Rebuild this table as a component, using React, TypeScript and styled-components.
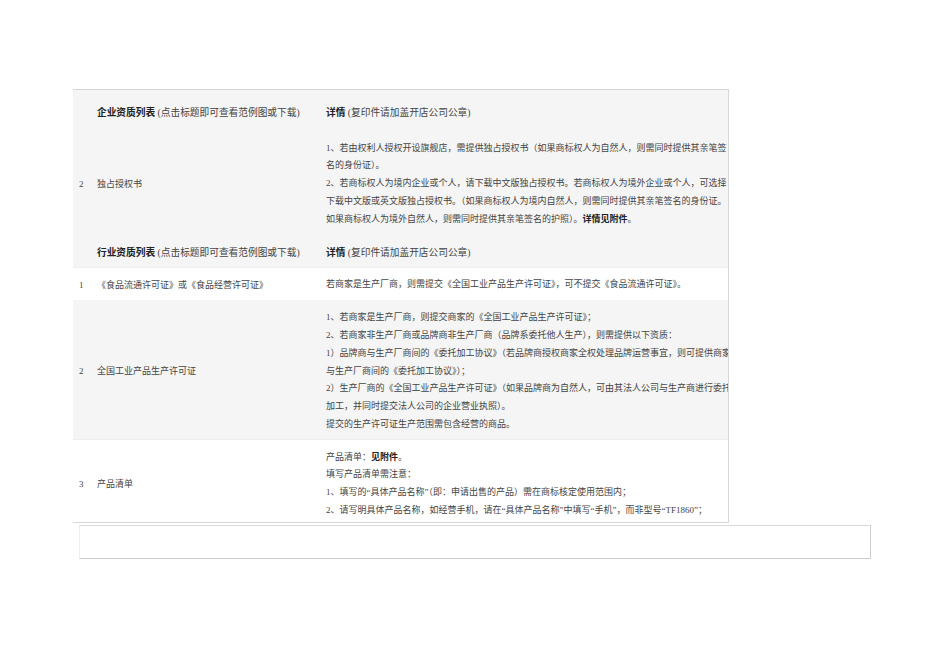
import styled, { createGlobalStyle } from "styled-components";

const GlobalStyle = createGlobalStyle`
  body {
    margin: 0;
    background: #ffffff;
    font-family: "Liberation Serif", "Noto Sans CJK SC", serif;
  }
`;

const Page = styled.div`
  padding: 89px 0 0 73px;
`;

const Panel = styled.div`
  box-sizing: border-box;
  width: 656px;
  height: 434px;
  overflow: hidden;
  background: #ffffff;
  border-top: 1px solid #d6d6d6;
  border-right: 1px solid #d6d6d6;
  border-bottom: 1px solid #d6d6d6;
`;

const HeaderRow = styled.div`
  display: grid;
  grid-template-columns: 18px 229px minmax(0, 1fr);
  align-items: center;
  padding: 10px 0 5px 6px;
  background: #f5f5f5;
  font-size: 9.7px;
  white-space: nowrap;

  &:first-child {
    padding: 14px 0 8px 6px;
  }
`;

const Row = styled.div<{ $shaded?: boolean }>`
  display: grid;
  grid-template-columns: 18px 229px minmax(0, 1fr);
  align-items: center;
  padding: 9.5px 0 5.5px 6px;
  background: ${({ $shaded }) => ($shaded ? "#f5f5f5" : "#ffffff")};
  box-shadow: ${({ $shaded }) => ($shaded ? "none" : "inset 0 1px 0 #eeeeee")};
  font-size: 9px;
  color: #444444;
`;

const Cell = styled.div`
  height: 18px;
  line-height: 18px;
  white-space: nowrap;
`;

const Detail = styled.div`
  display: flex;
  flex-direction: column;
`;

const Line = styled.div`
  height: 17.75px;
  line-height: 17.75px;
  white-space: nowrap;
`;

const Title = styled.span`
  font-weight: 700;
  color: #222222;
`;

const Hint = styled.span`
  color: #444444;
`;

const Strong = styled.b`
  font-weight: 700;
  color: #222222;
`;

const Footer = styled.div`
  box-sizing: border-box;
  width: 792px;
  height: 34px;
  margin: 2px 0 0 6px;
  background: #ffffff;
  border: 1px solid #cccccc;
  border-top-color: #d9d9d9;
  border-left-color: #eeeeee;
`;

type Item = {
  num?: string;
  name: string;
  lines: React.ReactNode[];
  shaded?: boolean;
};

const licences: Item[] = [
  {
    num: "2",
    name: "独占授权书",
    shaded: true,
    lines: [
      "1、若由权利人授权开设旗舰店，需提供独占授权书（如果商标权人为自然人，则需同时提供其亲笔签",
      "名的身份证）。",
      "2、若商标权人为境内企业或个人，请下载中文版独占授权书。若商标权人为境外企业或个人，可选择",
      "下载中文版或英文版独占授权书。（如果商标权人为境内自然人，则需同时提供其亲笔签名的身份证。",
      <>
        如果商标权人为境外自然人，则需同时提供其亲笔签名的护照）。<Strong>详情见附件</Strong>。
      </>,
    ],
  },
];

const industry: Item[] = [
  {
    num: "1",
    name: "《食品流通许可证》或《食品经营许可证》",
    lines: ["若商家是生产厂商，则需提交《全国工业产品生产许可证》，可不提交《食品流通许可证》。"],
  },
  {
    num: "2",
    name: "全国工业产品生产许可证",
    shaded: true,
    lines: [
      "1、若商家是生产厂商，则提交商家的《全国工业产品生产许可证》；",
      "2、若商家非生产厂商或品牌商非生产厂商（品牌系委托他人生产），则需提供以下资质：",
      "1）品牌商与生产厂商间的《委托加工协议》（若品牌商授权商家全权处理品牌运营事宜，则可提供商家",
      "与生产厂商间的《委托加工协议》）；",
      "2）生产厂商的《全国工业产品生产许可证》（如果品牌商为自然人，可由其法人公司与生产商进行委托",
      "加工，并同时提交法人公司的企业营业执照）。",
      "提交的生产许可证生产范围需包含经营的商品。",
    ],
  },
  {
    num: "3",
    name: "产品清单",
    lines: [
      <>
        产品清单：<Strong>见附件</Strong>。
      </>,
      "填写产品清单需注意：",
      "1、填写的“具体产品名称”（即：申请出售的产品）需在商标核定使用范围内；",
      "2、请写明具体产品名称，如经营手机，请在“具体产品名称”中填写“手机”，而非型号“TF1860”；",
    ],
  },
];

const Section = ({ title, items }: { title: string; items: Item[] }) => (
  <>
    <HeaderRow>
      <span />
      <Cell>
        <Title>{title}</Title>
        <Hint> (点击标题即可查看范例图或下载)</Hint>
      </Cell>
      <Cell>
        <Title>详情</Title>
        <Hint> (复印件请加盖开店公司公章)</Hint>
      </Cell>
    </HeaderRow>
    {items.map((item, i) => (
      <Row key={i} $shaded={item.shaded}>
        <Cell>{item.num}</Cell>
        <Cell>{item.name}</Cell>
        <Detail>
          {item.lines.map((line, j) => (
            <Line key={j}>{line}</Line>
          ))}
        </Detail>
      </Row>
    ))}
  </>
);

export default function App() {
  return (
    <Page>
      <GlobalStyle />
      <Panel>
        <Section title="企业资质列表" items={licences} />
        <Section title="行业资质列表" items={industry} />
      </Panel>
      <Footer />
    </Page>
  );
}
